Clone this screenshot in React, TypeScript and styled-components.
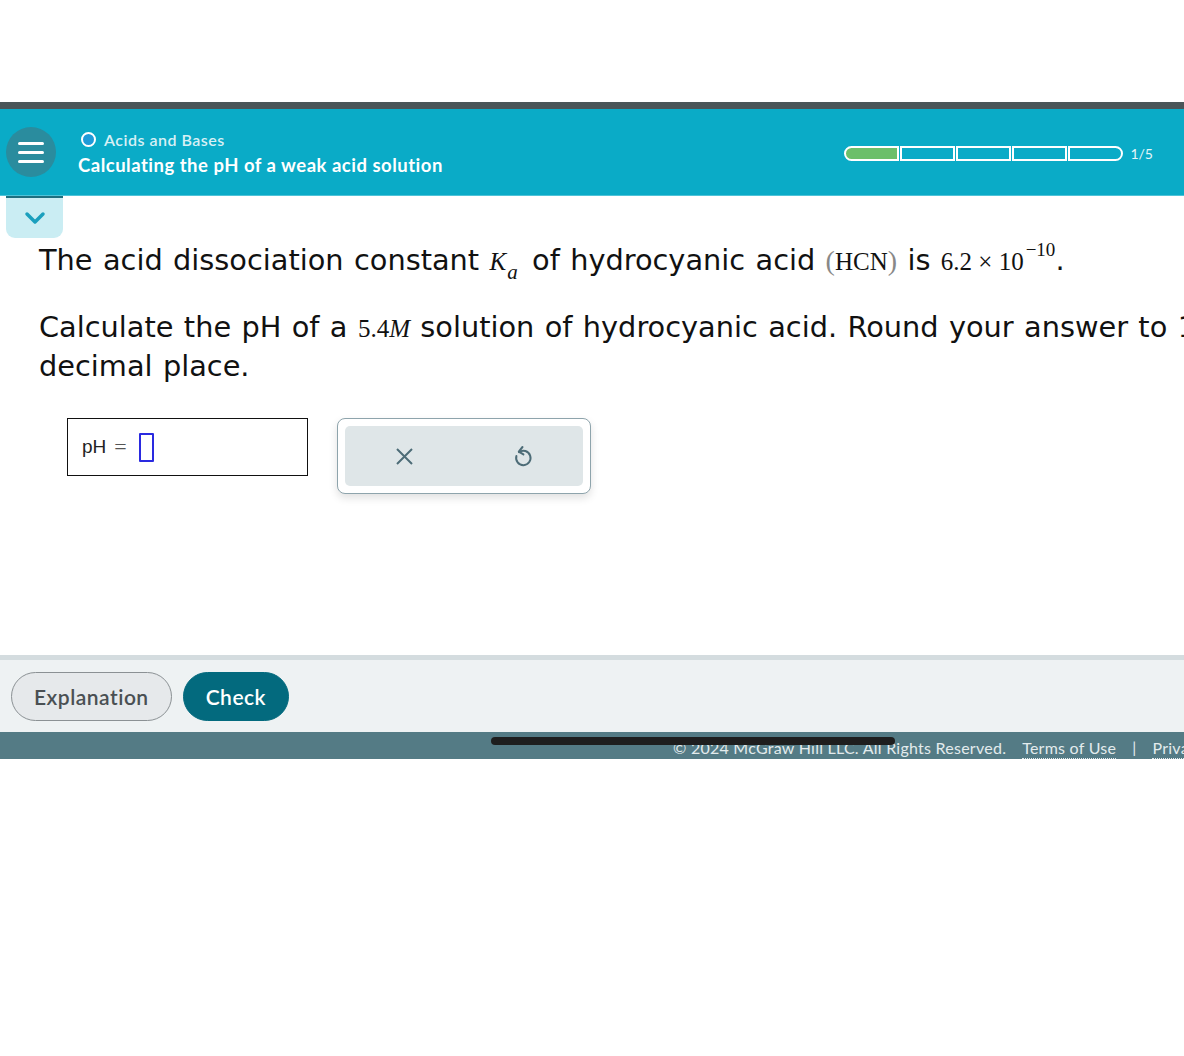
import React from 'react';
import styled, { createGlobalStyle } from 'styled-components';

const GlobalStyle = createGlobalStyle`
  html, body {
    margin: 0;
    padding: 0;
    background: #ffffff;
  }
  #root {
    width: 1184px;
    overflow: hidden;
  }
`;

const Page = styled.div`
  width: 1184px;
  overflow: hidden;
  padding-top: 102px;
  font-family: 'Lato', 'Open Sans', sans-serif;
`;

const TopStrip = styled.div`
  height: 7px;
  background: #4a5558;
`;

const Header = styled.header`
  height: 86px;
  background: #0aabc7;
  border-bottom: 1px solid #4fc3d8;
  display: flex;
  align-items: center;
  padding-left: 6px;
  padding-right: 31px;
`;

const MenuButton = styled.div`
  width: 50px;
  height: 50px;
  border-radius: 50%;
  background: #2a8c9e;
  display: flex;
  flex-direction: column;
  justify-content: center;
  align-items: center;
  gap: 6px;
`;

const MenuLine = styled.span`
  width: 26px;
  height: 3px;
  border-radius: 2px;
  background: #ffffff;
`;

const TitleBlock = styled.div`
  margin-left: 22px;
  display: flex;
  flex-direction: column;
  gap: 5px;
  padding-top: 2px;
`;

const Topic = styled.div`
  display: flex;
  align-items: center;
  gap: 8px;
  margin-left: 3px;
  color: #d8f0f5;
  font-size: 16px;
  font-weight: 600;
  letter-spacing: 0.5px;
`;

const TopicDot = styled.span`
  width: 11px;
  height: 11px;
  border-radius: 50%;
  border: 2px solid #ffffff;
  background: #1f9bd8;
`;

const Title = styled.div`
  color: #ffffff;
  font-size: 18.5px;
  font-weight: 700;
  letter-spacing: 0.5px;
`;

const Progress = styled.div`
  margin-left: auto;
  margin-top: 3px;
  display: flex;
  align-items: center;
`;

const Segment = styled.span<{ $filled?: boolean; $first?: boolean; $last?: boolean }>`
  width: 51px;
  height: 11px;
  border: 2px solid #ffffff;
  margin-right: 1px;
  background: ${({ $filled }) => ($filled ? '#6cbf6a' : 'transparent')};
  border-radius: ${({ $first, $last }) =>
    $first ? '8px 0 0 8px' : $last ? '0 8px 8px 0' : '0'};
`;

const ProgressLabel = styled.span`
  margin-left: 6px;
  color: #e6f6f9;
  font-size: 14px;
`;

const ChevronTab = styled.div`
  width: 57px;
  height: 40px;
  margin-left: 6px;
  background: #caedf3;
  border-top: 2px solid #1d6f7f;
  border-radius: 0 0 9px 9px;
  display: flex;
  justify-content: center;
  align-items: center;
`;

const Question = styled.div`
  width: 1220px;
  padding-left: 39px;
  margin-top: 3px;
  font-family: 'DejaVu Sans', Verdana, sans-serif;
  font-size: 28.8px;
  word-spacing: 1.2px;
  line-height: 39px;
  color: #111111;
`;

const Para = styled.p`
  margin: 0 0 28px 0;
`;

const MathText = styled.span<{ $italic?: boolean }>`
  font-family: 'Liberation Serif', 'Times New Roman', serif;
  font-size: 25px;
  line-height: 1;
  word-spacing: 0;
  font-style: ${({ $italic }) => ($italic ? 'italic' : 'normal')};
`;

const Sub = styled.sub`
  font-family: 'Liberation Serif', serif;
  font-style: italic;
  font-size: 21px;
  vertical-align: -9px;
  line-height: 0;
  margin-left: 1px;
  margin-right: 4px;
`;

const Sup = styled.sup`
  font-family: 'Liberation Serif', serif;
  font-size: 19px;
  vertical-align: 14px;
  line-height: 0;
  margin-left: 2px;
`;

const Paren = styled.span`
  color: #888888;
  font-size: 28px;
`;

const AnswerRow = styled.div`
  display: flex;
  align-items: flex-start;
  gap: 29px;
  margin-top: 32px;
  padding-left: 67px;
`;

const AnswerBox = styled.div`
  box-sizing: border-box;
  width: 241px;
  height: 58px;
  border: 1px solid #111111;
  display: flex;
  align-items: center;
  padding-left: 14px;
  font-family: 'Liberation Sans', Arial, sans-serif;
  font-size: 19px;
  color: #222222;
`;

const Equals = styled.span`
  margin: 0 12px 0 8px;
  font-family: 'Liberation Serif', serif;
  font-size: 22px;
  color: #555555;
`;

const Caret = styled.span`
  width: 15px;
  height: 29px;
  border: 2px solid #2a2ae0;
  box-sizing: border-box;
  border-radius: 1px;
`;

const ToolPanel = styled.div`
  width: 254px;
  height: 76px;
  box-sizing: border-box;
  border: 1px solid #8ea4ac;
  border-radius: 8px;
  padding: 7px;
  background: #ffffff;
  box-shadow: 0 4px 8px rgba(0, 0, 0, 0.12);
`;

const ToolInner = styled.div`
  height: 100%;
  border-radius: 5px;
  background: #dfe6e8;
  display: flex;
  align-items: center;
  justify-content: space-between;
  padding: 0 50px 0 50px;
  box-sizing: border-box;
`;

const Footer = styled.div`
  margin-top: 161px;
  border-top: 5px solid #d4dcdf;
  background: #eef2f3;
  height: 72px;
  display: flex;
  align-items: center;
  padding-left: 11px;
  gap: 11px;
  font-family: 'Lato', 'Open Sans', sans-serif;
`;

const PillButton = styled.button<{ $primary?: boolean }>`
  height: 49px;
  border-radius: 25px;
  padding: 0 ${({ $primary }) => ($primary ? '22px' : '22px')};
  font-family: inherit;
  font-size: 21px;
  letter-spacing: 0.5px;
  font-weight: 600;
  border: 1px solid ${({ $primary }) => ($primary ? '#036a7e' : '#8b9194')};
  background: ${({ $primary }) => ($primary ? '#036a7e' : '#e6e9eb')};
  color: ${({ $primary }) => ($primary ? '#ffffff' : '#4a5053')};
`;

const BottomBar = styled.div`
  position: relative;
  height: 27px;
  background: #547b85;
  display: flex;
  align-items: flex-end;
  padding-left: 673px;
  white-space: nowrap;
  font-family: 'Lato', 'Open Sans', sans-serif;
  font-size: 16px;
  letter-spacing: 0.25px;
  color: #e3ebed;
`;

const Copyright = styled.span`
  padding-bottom: 2px;
`;

const FooterLink = styled.span`
  margin-left: 16px;
  padding-bottom: 1px;
  border-bottom: 1px dotted #e3ebed;
`;

const Divider = styled.span`
  margin-left: 16px;
  padding-bottom: 3px;
`;

const ScrollPill = styled.div`
  position: absolute;
  left: 491px;
  top: 5px;
  width: 404px;
  height: 8px;
  border-radius: 4px;
  background: #1e1e1e;
`;

export default function App() {
  return (
    <Page>
      <GlobalStyle />
      <TopStrip />
      <Header>
        <MenuButton>
          <MenuLine />
          <MenuLine />
          <MenuLine />
        </MenuButton>
        <TitleBlock>
          <Topic>
            <TopicDot />
            Acids and Bases
          </Topic>
          <Title>Calculating the pH of a weak acid solution</Title>
        </TitleBlock>
        <Progress>
          <Segment $filled $first />
          <Segment />
          <Segment />
          <Segment />
          <Segment $last />
          <ProgressLabel>1/5</ProgressLabel>
        </Progress>
      </Header>
      <ChevronTab>
        <svg width="22" height="14" viewBox="0 0 22 14">
          <path d="M3 3l8 8 8-8" fill="none" stroke="#1a9fbd" strokeWidth="3.5" strokeLinecap="round" strokeLinejoin="round" />
        </svg>
      </ChevronTab>
      <Question>
        <Para>
          The acid dissociation constant{' '}
          <MathText $italic>
            K<Sub>a</Sub>
          </MathText>{' '}
          of hydrocyanic acid{' '}
          <MathText>
            <Paren>(</Paren>HCN<Paren>)</Paren>
          </MathText>{' '}
          is{' '}
          <MathText>
            6.2 × 10<Sup>−10</Sup>
          </MathText>
          .
        </Para>
        <Para>
          Calculate the pH of a{' '}
          <MathText>
            5.4<i>M</i>
          </MathText>{' '}
          solution of hydrocyanic acid. Round your answer to 1 decimal place.
        </Para>
      </Question>
      <AnswerRow>
        <AnswerBox>
          pH<Equals>=</Equals>
          <Caret />
        </AnswerBox>
        <ToolPanel>
          <ToolInner>
            <svg width="19" height="19" viewBox="0 0 19 19">
              <path d="M2 2l15 15M17 2L2 17" stroke="#4d6c77" strokeWidth="2" />
            </svg>
            <svg width="20" height="24" viewBox="0 0 20 24">
              <path d="M6 8.2A7.2 7.2 0 1 1 3.4 12" fill="none" stroke="#4d6c77" strokeWidth="2" strokeLinecap="round" />
              <path d="M9.5 3L5.8 7.6l4.6 2.8" fill="none" stroke="#4d6c77" strokeWidth="2" strokeLinecap="round" strokeLinejoin="round" />
            </svg>
          </ToolInner>
        </ToolPanel>
      </AnswerRow>
      <Footer>
        <PillButton>Explanation</PillButton>
        <PillButton $primary>Check</PillButton>
      </Footer>
      <BottomBar>
        <ScrollPill />
        <Copyright>© 2024 McGraw Hill LLC. All Rights Reserved.</Copyright>
        <FooterLink>Terms of Use</FooterLink>
        <Divider>|</Divider>
        <FooterLink>Privacy Center</FooterLink>
      </BottomBar>
    </Page>
  );
}
